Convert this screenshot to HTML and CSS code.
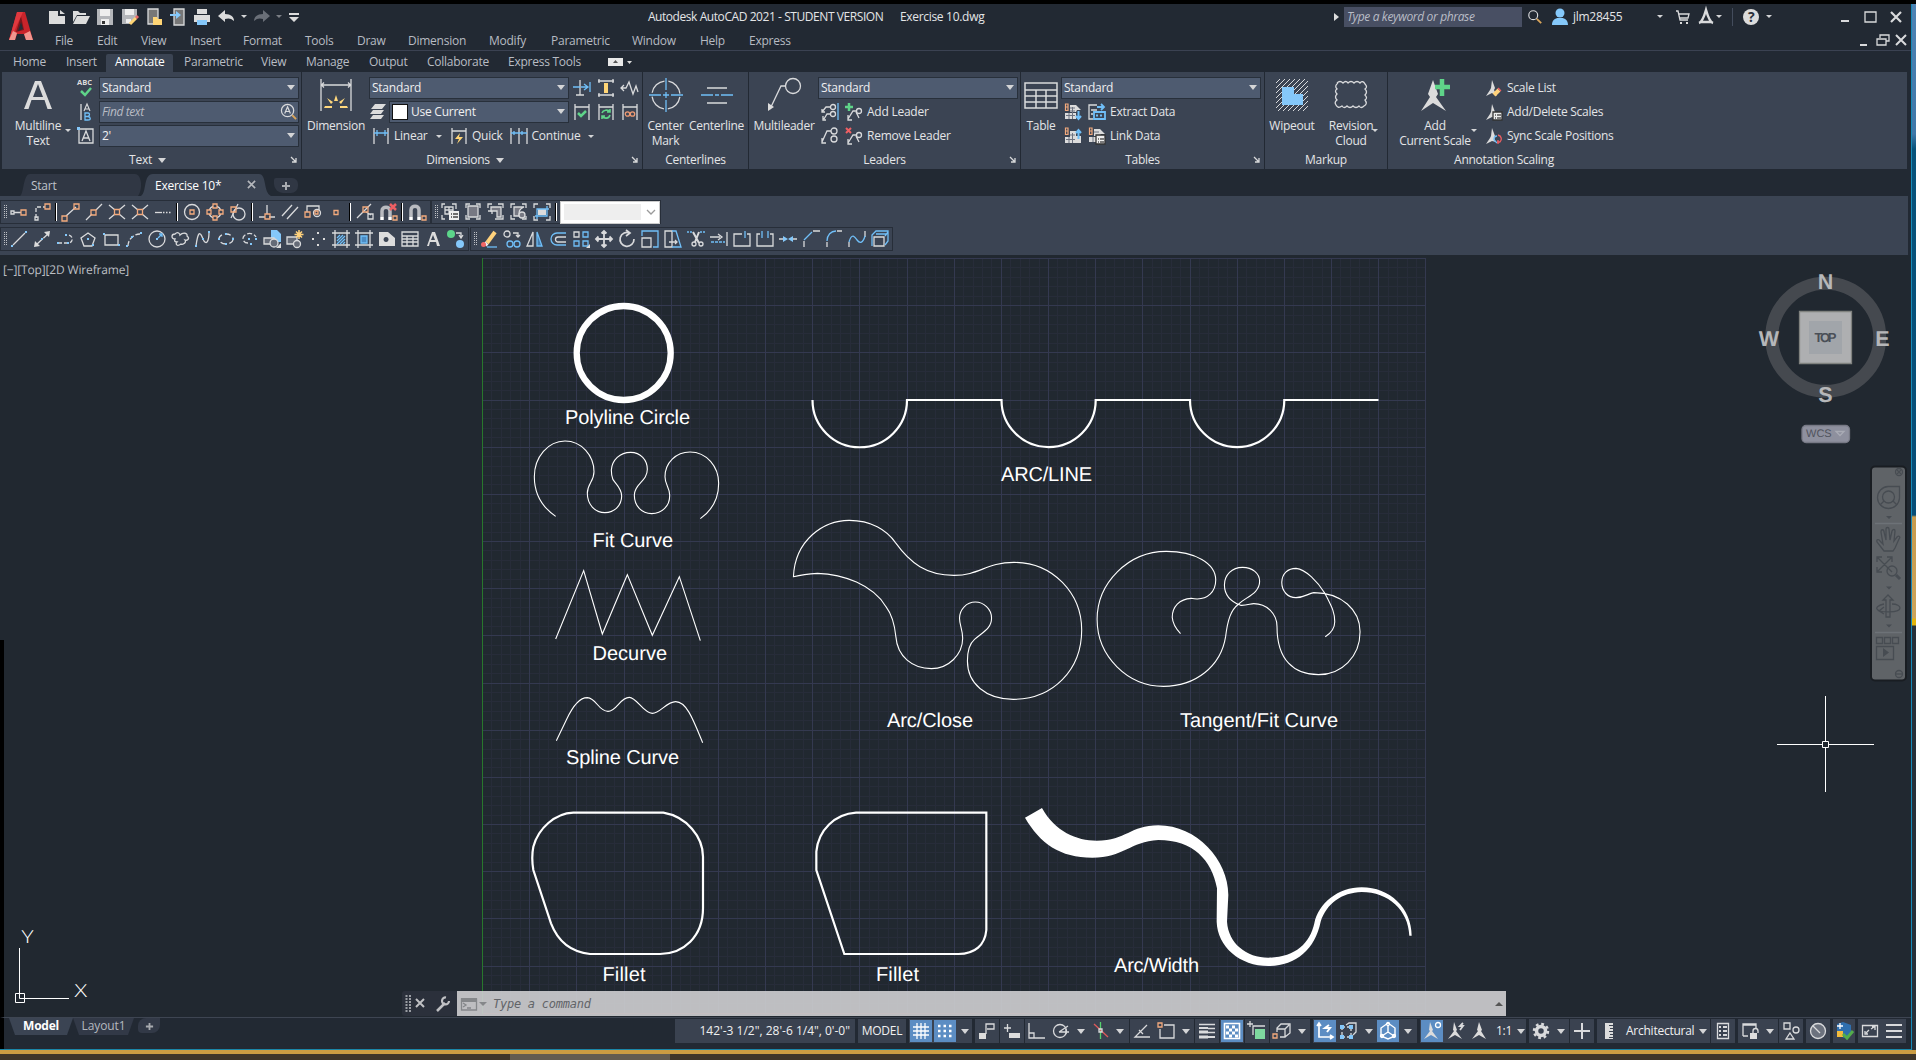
FILE: index.html
```html
<!DOCTYPE html>
<html lang="en">
<head>
<meta charset="utf-8">
<title>Autodesk AutoCAD 2021 - Exercise 10.dwg</title>
<link rel="stylesheet" href="styles.css">
</head>
<body>
<div class="desktop">
<div class="app">

<header class="titlebar">
  <svg class="logo" viewBox="0 0 26 30"><path fill="#c8242b" stroke="none" d="M9 1h8l8 28h-7l-2-6H9l-2 6H1z"/><path fill="#7c161c" stroke="none" d="M13 5l3 14-8 2z"/><path fill="#252c36" stroke="none" d="M13 11l2 7-5 2z"/><path fill="#e0393f" stroke="none" d="M9 1h6L8 16l-3 8-4 5z"/><path fill="#f2968f" stroke="none" d="M1 29l4-9 4 2-2 7zM18 29l-2-6 6-3 3 9z"/></svg>
  <div class="title-rows">
    <div class="row quick">
      <svg class="q" viewBox="0 0 18 18"><path class="fw" d="M1 3h9v5h7v8H1zM12 2l5 4h-5z"/></svg>
      <svg class="q" viewBox="0 0 18 18"><path class="fw" d="M1 3h5l2 2h6v2H5L1 14zM5 8h13l-4 8H1z"/></svg>
      <svg class="q" viewBox="0 0 18 18"><path class="fg" d="M1 1h16v16H1z"/><path fill="#eee" stroke="none" d="M4 1h10v7H4zM5 11h8v6H5z"/><path fill="#333" stroke="none" d="M6 13h3v3H6z"/></svg>
      <svg class="q" viewBox="0 0 18 18"><path class="fg" d="M1 1h15v9l-6 6H1z"/><path fill="#eee" stroke="none" d="M4 1h9v6H4zM5 11h5v4H5z"/><path stroke="#ffd575" stroke-width="3" d="M9 16l6-6"/><path stroke="#e76a6a" stroke-width="3" d="M15 10l2-2"/></svg>
      <svg class="q" viewBox="0 0 18 18"><path fill="#777" d="M3 1h10v15H3z"/><path class="fy" d="M8 9h4l1 2h4v6H8z"/></svg>
      <svg class="q" viewBox="0 0 18 18"><path fill="#777" d="M5 1h10v16H5z"/><path class="fb" d="M1 6h6V3l5 4-5 4V8H1z"/></svg>
      <svg class="q" viewBox="0 0 18 18"><path class="fw" d="M4 1h10v5H4zM1 7h16v7H1z"/><path class="fb" d="M4 12h10v5H4z"/></svg>
      <svg class="q" viewBox="0 0 18 18"><path class="fw" d="M1 8l7-6v4c6 0 9 3 9 7-3-3-6-3-9-2v3z"/></svg>
      <i class="caret qc"></i>
      <svg class="q" viewBox="0 0 18 18"><path fill="#6a6f78" stroke="none" d="M17 8l-7-6v4c-6 0-9 3-9 7 3-3 6-3 9-2v3z"/></svg>
      <i class="caret qc dim"></i>
      <svg class="q" viewBox="0 0 18 18"><path class="fw" d="M4 5h10v2H4zM4 9h10l-5 5z"/></svg>
      <span class="doc-title">Autodesk AutoCAD 2021 - STUDENT VERSION</span><span class="doc-name">Exercise 10.dwg</span>
      <i class="play"></i>
      <span class="search">Type a keyword or phrase</span>
      <svg class="q glass" viewBox="0 0 18 18"><circle cx="7" cy="7" r="5"/><path stroke="#d9a55b" stroke-width="2" d="M11 11l5 5"/></svg>
      <svg class="q user" viewBox="0 0 18 18"><circle class="fb" cx="9" cy="5" r="4.500"/><path class="fb" d="M1 17c0-5 3-6 5-7h6c2 1 5 2 5 7z"/></svg>
      <span class="user-name">jlm28455</span><i class="caret small"></i>
      <svg class="q cart" viewBox="0 0 18 18"><path d="M2 3h2l2 9h8M5 6h10l-1 4H6"/><path class="fw" d="M6 14h2v2H6zM12 14h2v2h-2z"/></svg>
      <svg class="q" viewBox="0 0 18 18"><path stroke-width="2.500" d="M2 15c3-1 5-6 7-13 2 7 4 12 7 13M3 14h12"/></svg>
      <i class="caret small ac"></i><i class="vline"></i>
      <svg class="q help" viewBox="0 0 18 18"><circle class="fw" cx="9" cy="9" r="8"/><text x="6" y="14">?</text></svg><i class="caret small hc"></i>
      <svg class="winbtns" viewBox="0 0 64 16"><path stroke-width="2.200" d="M1 12h8M51 3l10 10M61 3L51 13"/><path d="M25 3h11v10H25z"/></svg>
    </div>
    <nav class="row menu">
      <span>File</span><span>Edit</span><span>View</span><span>Insert</span><span>Format</span><span>Tools</span><span>Draw</span><span>Dimension</span><span>Modify</span><span>Parametric</span><span>Window</span><span>Help</span><span>Express</span>
      <svg class="docbtns" viewBox="0 0 48 16"><path stroke-width="2" d="M0 12h7M36 2l10 10M46 2L36 12"/><path d="M20 5V2h9v6h-3M17 6h9v6h-9z"/></svg>
    </nav>
  </div>
</header>

<nav class="tabs">
  <span>Home</span><span>Insert</span><span class="on">Annotate</span><span>Parametric</span><span>View</span><span>Manage</span><span>Output</span><span>Collaborate</span><span>Express Tools</span>
  <svg class="tabmin" viewBox="0 0 26 8"><path fill="#e8e8e8" stroke="none" d="M0 0h15v8H0z"/><path fill="#555" stroke="none" d="M5 5l2.500-3L10 5z"/><path class="fw" d="M19 3h5l-2.500 3z"/></svg>
</nav>

<section class="ribbon">
  <div class="panel p-text">
    <div class="pbody">
      <div class="big"><svg viewBox="0 0 32 34"><path class="fw" d="M13 3h6l11 28h-4.500l-3-9h-13l-3 9H2zM16 6l-5 13h10z" fill-rule="evenodd"/></svg><b>Multiline<br>Text</b><i class="caret small corner"></i></div>
      <div class="rows">
        <div class="r"><svg class="s" viewBox="0 0 18 18"><text class="abc" x="0" y="6">ABC</text><path class="g" stroke-width="2.500" d="M4 12l4 4 6-7"/></svg><span class="combo">Standard<i class="caret"></i></span></div>
        <div class="r"><svg class="s" viewBox="0 0 18 18"><path d="M4 1v16"/><path stroke-width="1.100" d="M7 8l3-7 3 7M8 6h4"/><path class="b" d="M8 10v7h3c3 0 3-3 0-3.500H8h3c2-.5 2-3.500 0-3.500z"/></svg><span class="combo find">Find text<svg class="fi" viewBox="0 0 18 18"><circle cx="8" cy="8" r="6.500"/><path d="M5 11l3-7 3 7M6 9h4"/><path stroke="#d9a55b" stroke-width="2" d="M13 13l4 4"/></svg></span></div>
        <div class="r"><svg class="s" viewBox="0 0 18 18"><path d="M2 2h14v14H2zM5 14L9 4l4 10M6 11h6"/><path class="fb" d="M0 0h3v3H0z"/></svg><span class="combo">2'<i class="caret"></i></span></div>
      </div>
    </div>
    <div class="ptitle">Text<i class="caret"></i><svg class="launch" viewBox="0 0 8 8"><path d="M1 1l5 5M6 2v4H2"/></svg></div>
  </div>

  <div class="panel p-dim">
    <div class="pbody">
      <div class="big"><svg viewBox="0 0 34 34"><path d="M2 1v32M32 1v32M2 7h30M5 4.500L2.500 7 5 9.500M29 4.500L31.500 7 29 9.500"/><path fill="#ffd87d" stroke="none" d="M15 23l2-6 2 6zM8 20l6 4-2 2zM26 20l-6 4 2 2zM6 28h7v2H5zM28 28h-7v2h8z"/></svg><b>Dimension</b></div>
      <div class="rows">
        <div class="r"><span class="combo">Standard<i class="caret"></i></span>
          <svg class="s" viewBox="0 0 18 18"><path d="M7 1v15M3 16h8"/><path class="b" d="M0 8h7M8 8h6M11 5l4 3-4 3M17 3v10"/></svg>
          <svg class="s" viewBox="0 0 18 18"><path d="M1 2h16M1 16h16M2 0v4M2 14v4M16 0v4M16 14v4"/><path class="fy" d="M7 4h4v10H7z"/></svg>
          <svg class="s" viewBox="0 0 18 18"><path d="M0 9h5l3-6 4 12 3-8 2 6M3 6L0 9l3 3"/></svg></div>
        <div class="r"><svg class="s lay" viewBox="0 0 18 18"><path class="fw" d="M6 1h11l-4 5H2zM4 7h11l-3 4H1zM4 12h11l-3 4H1z"/></svg><span class="combo use"><i class="swatch"></i>Use Current<i class="caret"></i></span>
          <svg class="s" viewBox="0 0 18 18"><path d="M2 1v16M16 1v16M2 4h14"/><path class="g" stroke-width="2.500" d="M5 10l3 3 5-5"/></svg>
          <svg class="s" viewBox="0 0 18 18"><path d="M2 1v16M16 1v16M2 4h14"/><path class="g" stroke-width="1.600" d="M5 10c1-3 6-4 8-1M13 12c-1 4-6 4-8 1M13 6v3h-3M5 16v-3h3"/></svg>
          <svg class="s" viewBox="0 0 18 18"><path d="M2 1v16M16 1v16M2 4h14"/><circle class="r1" cx="6.500" cy="11" r="2.200"/><circle class="r1" cx="11.500" cy="11" r="2.200"/></svg></div>
        <div class="r cmds"><svg class="s" viewBox="0 0 18 18"><path d="M2 1v16M16 1v16"/><path class="b" d="M2 6h14M5 3v6M13 3v6"/></svg><em>Linear</em><i class="caret small"></i>
          <svg class="s quickd" viewBox="0 0 18 18"><path d="M2 1v16M16 1v16M2 4h14"/><path class="fy" d="M10 6l-5 6h4l-2 5 6-7H9z"/></svg><em>Quick</em>
          <svg class="s cont" viewBox="0 0 18 18"><path d="M1 1v16M9 1v16M17 1v16"/><path class="b" d="M1 6h16M4 4v4M12 4v4"/></svg><em>Continue</em><i class="caret small"></i></div>
      </div>
    </div>
    <div class="ptitle">Dimensions<i class="caret"></i><svg class="launch" viewBox="0 0 8 8"><path d="M1 1l5 5M6 2v4H2"/></svg></div>
  </div>

  <div class="panel p-cen">
    <div class="pbody">
      <div class="big"><svg viewBox="0 0 34 34"><circle cx="17" cy="17" r="14" stroke-dasharray="18 4" stroke-dashoffset="-2"/><path class="b" d="M17 0v12M17 22v12M0 17h12M22 17h12M14 17h6M17 14v6"/></svg><b>Center<br>Mark</b></div>
      <div class="big"><svg viewBox="0 0 34 34"><path d="M7 10h20M7 25h20"/><path class="b" d="M1 17h12M15 17h4M21 17h12"/></svg><b>Centerline</b></div>
    </div>
    <div class="ptitle">Centerlines</div>
  </div>

  <div class="panel p-lead">
    <div class="pbody">
      <div class="big"><svg viewBox="0 0 34 34"><circle cx="26" cy="8" r="7.500"/><path d="M19 8h-5L3 31"/><path class="fw" d="M1 33V25l6 4z"/></svg><b>Multileader</b></div>
      <div class="rows">
        <div class="r"><span class="combo">Standard<i class="caret"></i></span></div>
        <div class="r cmds l"><svg class="s" viewBox="0 0 18 18"><circle cx="12" cy="4" r="2.500"/><circle cx="12" cy="11" r="2.500"/><path d="M10 4H5L1 9M10 11H6l-3 5M1 6v3h3M2 13v4h3"/><path class="b" d="M17 0v17"/></svg><svg class="s" viewBox="0 0 18 18"><path class="g" stroke-width="2.500" d="M4 0v8M0 4h8"/><circle cx="14" cy="8" r="2.500"/><path d="M12 8H8l-5 8M11 9l3 6M3 12v5h4"/></svg><em>Add Leader</em></div>
        <div class="r cmds l"><svg class="s" viewBox="0 0 18 18"><circle cx="13" cy="4" r="3"/><circle cx="13" cy="12" r="3"/><path d="M10 4H6L1 15M1 11v5h4"/></svg><svg class="s" viewBox="0 0 18 18"><path class="red" stroke-width="2" d="M1 1l5 5M6 1L1 6"/><circle cx="14" cy="8" r="2.500"/><path d="M12 8H8l-5 8M11 9l3 6M3 12v5h4"/></svg><em>Remove Leader</em></div>
      </div>
    </div>
    <div class="ptitle">Leaders<svg class="launch" viewBox="0 0 8 8"><path d="M1 1l5 5M6 2v4H2"/></svg></div>
  </div>

  <div class="panel p-tab">
    <div class="pbody">
      <div class="big"><svg viewBox="0 0 34 34"><path stroke-width="1.500" d="M1 5h32v25H1zM1 12h32M1 18h32M1 24h32M12 12v18M22 12v18"/></svg><b>Table</b></div>
      <div class="rows">
        <div class="r"><span class="combo">Standard<i class="caret"></i></span></div>
        <div class="r cmds l"><svg class="s" viewBox="0 0 18 18"><path class="fw" d="M6 2h6l5 5h-4l-1 2H6zM1 10h11v6H1z"/><path stroke="#6d7380" stroke-width="1" d="M6 5h5M6 8h5M2 12.500h9M5 10v6M8.500 4v12"/><path stroke="#f3aa7d" stroke-width="1.200" d="M1.500 1h2.500v3H1.500zM1.500 4H4v3.500H1.500z"/><path class="b" stroke-width="2" d="M14.500 8v7M12 13l2.500 3 2.500-3"/></svg><svg class="s" viewBox="0 0 18 18"><path d="M9 2H1v14h4M3 7h6M3 11h2"/><path class="b" stroke-width="1.800" d="M9 4h7M13 1l3 3-3 3M6 9h11v7H6zM8 12.500h2M12 12.500h2"/></svg><em>Extract Data</em></div>
        <div class="r cmds l"><svg class="s" viewBox="0 0 18 18"><path class="fw" d="M6 4h6v5h5v7H1v-6h5z"/><path stroke="#6d7380" stroke-width="1" d="M6 8h5M2 12.500h9M5 10v6M8.500 6v10"/><path stroke="#f3aa7d" stroke-width="1.200" d="M1.500 1h2.500v3H1.500zM1.500 4H4v3.500H1.500z"/><path class="b" stroke-width="2" d="M14.500 12V4M12 6l2.500-3L17 6"/></svg><svg class="s" viewBox="0 0 18 18"><path class="fw" d="M6 2h6l5 5h-4l-1 2H6zM1 10h11v5H1z"/><path stroke="#6d7380" stroke-width="1" d="M6 5h5M5 10v5"/><path stroke="#f3aa7d" stroke-width="1.200" d="M1.500 1h2.500v3H1.500zM1.500 4H4v3.500H1.500z"/><path fill="#eee" stroke="#333" d="M8 8h9v9H8z"/><path stroke="#555" d="M10 12h1M12 12h4M10 15h1M12 15h4"/></svg><em>Link Data</em></div>
      </div>
    </div>
    <div class="ptitle">Tables<svg class="launch" viewBox="0 0 8 8"><path d="M1 1l5 5M6 2v4H2"/></svg></div>
  </div>

  <div class="panel p-mark">
    <div class="pbody">
      <div class="big"><svg viewBox="0 0 34 34"><path stroke-width="1" d="M1 5l4-4M1 10l9-9M1 15L15 1M1 20L20 1M1 25L25 1M1 30L30 1M3 33L33 3M8 33L33 8M13 33l20-20M18 33l15-15M23 33l10-10M28 33l5-5"/><path class="fb" d="M7 9h12v7h9v11H7z"/></svg><b>Wipeout</b></div>
      <div class="big"><svg viewBox="0 0 34 34"><path d="M3 5q3-3 6 0q3-3 5 0q3-3 6 0q3-3 6 0q3-3 5 1q3 3 0 5q3 3 0 6q3 3 0 5q3 4-1 6q-3 3-5 0q-3 3-6 0q-3 3-6 0q-3 3-5 0q-4 3-6-1q-2-3 1-5q-3-3 0-6q-3-3 0-5q-3-3 1-6"/></svg><b>Revision<br>Cloud</b><i class="caret small corner"></i></div>
    </div>
    <div class="ptitle">Markup</div>
  </div>

  <div class="panel p-ann">
    <div class="pbody">
      <div class="big"><svg viewBox="0 0 34 34"><path class="fw" d="M15 2l5 14-2 3 10 14-13-8-12 8 9-14-2-3z"/><path class="g" stroke-width="4.500" d="M24 1v17M17 9h15"/></svg><b>Add<br>Current Scale</b><i class="caret small corner"></i></div>
      <div class="rows ann">
        <div class="r cmds"><svg class="s" viewBox="0 0 18 18"><path class="fw" d="M7 1l3 8-1 2 3 6-5-3-6 3 4-6 1-2z"/><path class="yl" stroke-width="4" d="M9 16l5-5"/><path class="red" stroke-width="4" d="M14 11l1-1"/></svg><em>Scale List</em></div>
        <div class="r cmds"><svg class="s" viewBox="0 0 18 18"><path class="fw" d="M7 1l3 8-1 2 3 6-5-3-6 3 4-6 1-2z"/><path fill="#eee" stroke="#333" d="M8 9h9v8H8z"/><path stroke="#555" d="M10 12h1M12 12h4M10 15h1M12 15h4"/></svg><em>Add/Delete Scales</em></div>
        <div class="r cmds"><svg class="s" viewBox="0 0 18 18"><path class="fw" d="M7 1l3 8-1 2 2 4-4-1-6 3 4-6 1-2z"/><path class="b" d="M9 13c0-3 1-4 3-4M9 13l3 3"/><path class="red" d="M13 8c4 1 4 5 2 7M15 15h-3M13 17v-4"/></svg><em>Sync Scale Positions</em></div>
      </div>
    </div>
    <div class="ptitle at">Annotation Scaling</div>
  </div>
</section>

<nav class="files">
  <span class="ft start">Start</span><span class="ft act">Exercise 10*<svg viewBox="0 0 10 10"><path stroke-width="1.800" d="M1 1l8 8M9 1L1 9"/></svg></span><span class="plus"><svg viewBox="0 0 10 10"><path stroke-width="2" d="M5 1v8M1 5h8"/></svg></span>
</nav>

<section class="toolbars">
  <div class="tbrow">
    <div class="tb">
      <i class="grip"></i>
      <svg viewBox="0 0 20 20"><path d="M2 9h3v3H2zM5 10.500h7"/><path class="o" d="M12 8h5v5h-5z"/></svg>
      <svg viewBox="0 0 20 20"><path stroke-dasharray="4 2" d="M4 16V5h9"/><path d="M3 15h3v3H3z"/><path class="o" d="M13 2h5v5h-5z"/></svg>
      <i class="sep"></i>
      <svg viewBox="0 0 20 20"><path d="M5 14L15 5"/><path class="o" d="M1 14h5v5H1zM13 2h5v5h-5z"/></svg>
      <svg viewBox="0 0 20 20"><path d="M2 18l6-6M12 8l6-6"/><path class="o" d="M7 8h5v5H7z"/></svg>
      <svg viewBox="0 0 20 20"><path d="M2 3l6 5M12 12l6 5M18 3l-6 5M8 12l-6 5"/><path class="o" d="M7.500 7.500h5v5h-5z"/></svg>
      <svg viewBox="0 0 20 20"><path d="M2 3l6 5M12 12l6 5M18 3l-6 5M8 12l-6 5"/><path class="o" d="M7.500 7.500h5v5h-5z"/></svg>
      <svg viewBox="0 0 20 20"><path d="M2 10.500h7"/><path stroke-dasharray="1.500 1.500" d="M10 10.500h8"/></svg>
      <i class="sep"></i>
      <svg viewBox="0 0 20 20"><circle cx="10" cy="10" r="7.500"/><path class="o" d="M8 8h4v4H8z"/></svg>
      <svg viewBox="0 0 20 20"><circle cx="10" cy="10" r="6"/><path class="o tbg" d="M8 2h4v4H8zM8 14h4v4H8zM2 8h4v4H2zM14 8h4v4h-4z"/></svg>
      <svg viewBox="0 0 20 20"><circle cx="11" cy="12" r="6"/><path d="M3 16L10 2"/><path class="o" d="M3 5h5v5H3z"/></svg>
      <i class="sep"></i>
      <svg viewBox="0 0 20 20"><path d="M10 3v9M2 15h6M12 15h6"/><path class="o" d="M8 12h5v5H8z"/></svg>
      <svg viewBox="0 0 20 20"><path d="M2 14L12 3M7 17L18 5"/></svg>
      <svg viewBox="0 0 20 20"><path d="M4 10V4h12v4"/><circle cx="14" cy="11" r="3.500"/><path class="o" d="M2 10h5v5H2zM12 9h3v3h-3z"/></svg>
      <svg viewBox="0 0 20 20"><path class="o" d="M8 8.500h4v4H8z"/></svg>
      <i class="sep"></i>
      <svg viewBox="0 0 20 20"><path d="M2 16L16 2M11 10l5 3M13 12h5v5h-5z"/><path class="o" d="M8 5h5v5H8z"/></svg>
      <svg viewBox="0 0 20 20"><path stroke="#b9bbc0" stroke-width="3.500" d="M4 15V9c0-5 8-5 8 0v6"/><path stroke="#fff" stroke-width="3.500" d="M4 15v3M12 15v3"/><path class="red" stroke-width="2.500" d="M12 2l6 6M18 2l-6 6"/><path class="o" d="M15 14h4v4h-4z"/></svg>
      <i class="sep"></i>
      <svg viewBox="0 0 20 20"><path stroke="#b9bbc0" stroke-width="3.500" d="M4 15V8c0-5 8-5 8 0v7"/><path stroke="#fff" stroke-width="3.500" d="M4 15v3M12 15v3"/><path class="o" d="M15 14h4v4h-4z"/></svg>
    </div>
    <div class="tb last">
      <i class="grip"></i>
      <svg viewBox="0 0 20 20"><path d="M2 6V2h3M12 2h4v5M2 13v4h3M5 5h8v7H5zM5 8h8M9 5v7"/><path fill="#eee" stroke="none" d="M9 9h10v9H9z"/><path stroke="#444" d="M11 12h1M13 12h5M11 15h1M13 15h5"/></svg>
      <svg viewBox="0 0 20 20"><path d="M3 6V2h4M13 2h4v4M3 13v4h4M13 17h4v-4"/><path fill="#777983" d="M5 4h10v11H5z"/></svg>
      <svg viewBox="0 0 20 20"><path d="M2 6V2h4M12 2h5v4M9 17h8v-4M2 9h4v3"/><path fill="#777983" d="M5 5h10v10h-4V9H5z"/></svg>
      <svg viewBox="0 0 20 20"><path d="M2 6V2h4M13 2h4v4M2 13v4h4M13 17h4v-3"/><path fill="#777983" d="M5 5h10c-5 2-5 4-5 9H5z"/><circle fill="#777983" cx="13" cy="13" r="3"/></svg>
      <svg viewBox="0 0 20 20"><path d="M2 6V2h4M14 2h4v4M2 14v4h4M14 18h4v-4"/><path class="fw" d="M6 7h8v6H6z"/><path class="b" d="M3 14h12V4M5 17V7h12"/></svg>
      <i class="sep"></i>
      <span class="vpcombo"><i></i><svg viewBox="0 0 10 10"><path stroke="#9a9a9a" d="M1 3l4 4 4-4"/></svg></span>
    </div>
  </div>
  <div class="tbrow">
    <div class="tb draw">
      <i class="grip"></i>
      <svg viewBox="0 0 20 20"><path d="M4 16L16 4"/><path class="fb" d="M2 16h2v2H2zM16 2h2v2h-2z"/></svg>
      <svg viewBox="0 0 20 20"><path stroke-dasharray="8 2" d="M4 16L17 4"/><path class="fw" d="M2 18l1-6 5 5zM18 2l-6 1 5 5z"/><path class="fb" d="M9 9h2v2H9z"/></svg>
      <svg viewBox="0 0 20 20"><path stroke-dasharray="4 2" d="M3 14h11c5-1 4-9-2-8"/><path class="fb" d="M2 13h2v2H2zM12 13h2v2h-2zM10 5h2v2h-2z"/></svg>
      <svg viewBox="0 0 20 20"><path d="M10 4l7 5-3 8H6L3 9z"/><path class="fb" d="M9 9h2v2H9zM14 15h2v2h-2z"/></svg>
      <svg viewBox="0 0 20 20"><path d="M4 6h13v10H4z"/><path class="fb" d="M2 4h2v2H2zM17 15h2v2h-2z"/></svg>
      <svg viewBox="0 0 20 20"><path stroke-dasharray="5 2" d="M4 17C4 10 10 5 16 5"/><path class="fb" d="M2 16h2v2H2zM7 7h2v2H7zM16 3h2v2h-2z"/></svg>
      <svg viewBox="0 0 20 20"><circle cx="10" cy="10" r="8"/><path class="b" d="M11 9l4-4M12 5h3v3"/><path class="fb" d="M9 9h2v2H9z"/></svg>
      <svg viewBox="0 0 20 20"><path d="M5 10c-4 0-4-5 0-5 3-3 5 0 5 1 3-3 8-2 7 1 3 2 1 5-2 4 2 3-3 5-4 4-4 3-6 0-4-2-2 0-3-1-2-3z"/></svg>
      <svg viewBox="0 0 20 20"><path d="M3 17C5 2 7 2 10 10c3 7 6 3 6-7"/><path class="fb" d="M2 16h2v2H2zM9 9h2v2H9zM15 2h2v2h-2z"/></svg>
      <svg viewBox="0 0 20 20"><ellipse cx="10" cy="10" rx="7" ry="5" stroke-dasharray="6 3"/><path class="fb" d="M9 4h2v2H9zM2 9h2v2H2zM16 9h2v2h-2zM9 14h2v2H9z"/></svg>
      <svg viewBox="0 0 20 20"><path stroke-dasharray="5 2" d="M9 14C4 14 3 9 5 7c3-4 10-3 12 1"/><path class="fb" d="M9 9h2v2H9zM16 9h2v2h-2zM11 14h2v2h-2z"/></svg>
      <svg viewBox="0 0 20 20"><path class="fb" d="M9 1h6l4 4v8H9z"/><path fill="#656b77" d="M2 9h10v6H2z"/><circle fill="#656b77" cx="12" cy="14" r="4"/><path class="fw" d="M19 14v5h-5z"/></svg>
      <svg viewBox="0 0 20 20"><path fill="#656b77" d="M2 8h10v7H2z"/><circle fill="#656b77" cx="12" cy="15" r="3.500"/><path class="yl" stroke-width="1.500" d="M14 1v9M9.500 5.500h9M11 2.500l6 6M17 2.500l-6 6"/></svg>
      <svg viewBox="0 0 20 20"><path class="fw" d="M9 3h2v2H9zM4 9h2v2H4zM15 9h2v2h-2zM9 15h2v2H9z"/></svg>
      <svg viewBox="0 0 20 20"><path d="M4 1v18M16 1v18M1 4h18M1 16h18"/><path class="b" d="M6 9l3-3M6 12l6-6M6 15l8-8M9 15l5-5M12 15l2-2"/></svg>
      <svg viewBox="0 0 20 20"><path d="M4 1v18M16 1v18M1 4h18M1 16h18"/><path class="b" fill="#4c8cc4" d="M7 7h6v7H7z"/></svg>
      <svg viewBox="0 0 20 20"><path class="fw" fill-rule="evenodd" d="M2 3h9l7 6v8H2zM9 8a2.500 2.500 0 1 0 .1 0z"/></svg>
      <svg viewBox="0 0 20 20"><path d="M2 3h16v14H2zM2 7h16M2 10h16M2 13h16M7 7v10M13 7v10"/></svg>
      <svg viewBox="0 0 20 20"><path class="fw" fill-rule="evenodd" d="M9 3h3l5 14h-3l-1-4H7l-1 4H4zM10 6l-2 5h4z"/></svg>
      <svg viewBox="0 0 20 20"><circle fill="#5cd68a" stroke="none" cx="5" cy="5" r="4"/><circle class="fb" cx="14" cy="15" r="4"/><path d="M10 4h5v4M13 6l2 3 2-3"/></svg>
    </div>
    <div class="tb mod">
      <i class="grip"></i>
      <svg viewBox="0 0 20 20"><path class="yl" stroke-width="4" d="M8 14L16 3"/><path stroke="#eee" stroke-width="4" d="M6 16l2-2"/><circle fill="#f26666" stroke="none" cx="4.500" cy="15.500" r="2.500"/><path class="b" d="M8 18h10"/></svg>
      <svg viewBox="0 0 20 20"><circle cx="5" cy="5" r="3"/><path d="M11 4h5v4M14 6l2 2 2-2"/><circle class="b" cx="8" cy="15" r="3"/><circle class="b" cx="15" cy="15" r="3"/></svg>
      <svg viewBox="0 0 20 20"><path d="M8 3v14H2z"/><path class="b" fill="#467dae" d="M12 3v14h5z"/></svg>
      <svg viewBox="0 0 20 20"><path class="b" d="M18 4H9a6 6 0 0 0 0 12h9"/><path d="M18 8h-8a2.500 2.500 0 0 0 0 5h8"/></svg>
      <svg viewBox="0 0 20 20"><path d="M3 3h5v5H3z"/><path class="b" d="M12 3h5v5h-5zM3 12h5v5H3zM12 12h5v5h-5z"/><path class="fw" d="M19 15v4h-4z"/></svg>
      <svg viewBox="0 0 20 20"><path stroke-width="1.800" d="M10 2v16M2 10h16M7.500 4.500L10 2l2.500 2.500M7.500 15.500L10 18l2.500-2.500M4.500 7.500L2 10l2.500 2.500M15.500 7.500L18 10l-2.500 2.500"/></svg>
      <svg viewBox="0 0 20 20"><path stroke-width="1.700" d="M13 4a7 7 0 1 0 4 6M9 1l4 3-4 3"/></svg>
      <svg viewBox="0 0 20 20"><path class="b" d="M2 7V2h16v16h-5"/><path d="M2 9h9v9H2z"/></svg>
      <svg viewBox="0 0 20 20"><path d="M2 2h7v16H2zM6 13h8M12 11l2 2-2 2"/><path class="b" d="M9 2h4l5 16H9"/></svg>
      <svg viewBox="0 0 20 20"><path class="b" stroke-dasharray="2 1" d="M1 3h5M14 3h5"/><path stroke-width="2" d="M7 3l6 11M13 3L9 13"/><circle cx="8" cy="15" r="2"/><circle cx="15" cy="15" r="2"/></svg>
      <svg viewBox="0 0 20 20"><path d="M1 8h10M9 5l4 3-4 3M18 3v14"/><path class="b" stroke-dasharray="3 1" d="M2 13h14"/></svg>
      <svg viewBox="0 0 20 20"><path d="M10 5H2v12h16V5h-3"/><path class="b" d="M13 2v7"/></svg>
      <svg viewBox="0 0 20 20"><path d="M5 5H2v12h16V5h-3"/><path class="b" d="M7 2v7M13 2v7"/></svg>
      <svg viewBox="0 0 20 20"><path d="M1 10h4M15 10h4"/><path class="fb" d="M5 7l5 3-5 3zM15 7l-5 3 5 3z"/></svg>
      <svg viewBox="0 0 20 20"><path d="M3 18v-6M12 2h7"/><path class="b" d="M3 11l8-8"/></svg>
      <svg viewBox="0 0 20 20"><path d="M3 18v-5M13 2h5"/><path class="b" d="M3 12C3 6 7 2 12 2"/></svg>
      <svg viewBox="0 0 20 20"><path d="M2 18v-5M18 2v6"/><path class="b" d="M2 13C5 3 8 8 10 11c3 4 6 3 8-4"/></svg>
      <svg viewBox="0 0 20 20"><path d="M4 8h10v9H4z"/><path class="b" d="M2 17V6l4-4h12v10l-3 4M6 5h10M15 7l3-4"/></svg>
    </div>
  </div>
</section>

<main class="canvas">
  <svg class="drawing" viewBox="0 255 1911 762" text-rendering="geometricPrecision">
    <g class="grid">
      <path class="minor" stroke-width="755" stroke-dasharray="1 8.434" d="M482 635.500H1426.500"/>
      <path class="minor" stroke-width="944" stroke-dasharray="1 8.434" d="M954 258V1014"/>
      <path class="major" stroke-width="755" stroke-dasharray="1 46.170" d="M482 635.500H1426.500"/>
      <path class="major" stroke-width="944" stroke-dasharray="1 46.170" d="M954 258V1014"/>
      <path stroke="#28772c" stroke-width="1" d="M482.500 258V1014"/><path stroke="#6b2530" stroke-width="1" d="M483 1013.500H1426"/>
    </g>
    <path fill="#000" stroke="none" d="M0 640h4v377H0z"/>
    <g class="ents">
      <circle cx="623.700" cy="353" r="47" stroke-width="6.300"/>
      <path class="w2" d="M812.500 400A40 40 0 0 0 907 400H1001.500A40 40 0 0 0 1095.700 400H1190A40 40 0 0 0 1284.300 400H1378.500"/>
      <g transform="translate(470 280) scale(.33333)">
        <path d="M257 709C215 680 193 640 193 590C193 530 235 483 285 483C335 483 372 527 372 575C372 605 352 610 352 640C352 673 374 698 405 698C433 698 455 676 455 648C455 625 438 613 429 599C425 590 424 580 424 570C426 540 450 517 482 517C512 517 532 540 532 568C532 605 493 610 493 645C493 678 515 701 545 701C576 701 600 678 599 645C599 622 585 615 585 590C585 548 618 516 660 516C710 516 746 560 746 610C746 655 725 692 691 716"/>
        <path d="M257 1077L341 872L397 1062L472 884L547 1066L628 890L691 1082"/>
      </g>
      <g transform="translate(470 640) scale(.33333)">
        <path d="M259 302L290 238C310 195 330 173 352 173C380 175 385 214 414 214C440 214 450 172 478 172C500 172 520 220 547 220C570 220 590 185 617 185C650 185 670 240 698 308"/>
        <path class="w2" d="M310 518H580C650 530 699 590 699 650V805C699 890 640 942 570 942H360C300 935 262 900 243 850L190 690C185 660 187 635 190 620C205 565 255 520 310 518Z"/>
        <path class="w2" d="M1158 518H1549V870C1545 915 1515 942 1465 942H1123L1039 690V635C1045 570 1095 522 1158 518Z"/>
      </g>
      <g transform="translate(780 380) scale(.3954 .33333)">
        <path d="M34 590C38 480 110 421 175 421C230 421 270 450 292 488C330 550 370 586 440 586C505 586 520 548 592 547C690 547 763 640 763 750C763 870 690 958 590 958C520 958 474 910 474 843C474 810 480 790 492 778C515 755 535 745 535 714C535 687 515 666 494 666C472 666 454 688 454 715C454 735 462 748 462 775C462 825 425 866 383 866C335 866 297 830 293 770C290 735 284 705 268 680C235 615 160 582 95 580Q60 583 34 590Z"/>
        <path d="M1013 761C1000 745 993 730 992 712C992 680 1010 657 1040 655C1085 665 1102 630 1102 600C1102 550 1050 514 977 514C880 514 802 610 802 718C802 830 880 919 970 919C1050 919 1115 860 1127 770C1132 720 1140 690 1160 672C1180 650 1213 640 1213 604C1213 580 1195 562 1170 562C1143 562 1124 585 1124 615C1124 645 1140 665 1165 676C1180 677 1190 671 1198 671C1230 671 1257 700 1257 740C1257 840 1300 884 1362 884C1420 884 1467 830 1467 755C1467 690 1420 638 1350 638C1335 641 1325 653 1305 653C1285 653 1269 635 1269 607C1270 580 1285 565 1305 565C1330 568 1360 605 1378 640C1395 680 1403 695 1403 725C1403 745 1395 758 1379 770"/>
      </g>
      <path class="solid" transform="translate(980 780) scale(.33333)" d="M186 84C225 155 290 182 350 182C440 182 450 136 535 136C650 136 745 240 745 345L741 425C745 490 800 533 865 533C945 533 990 490 1003 430C1015 370 1075 322 1145 322C1230 322 1295 385 1295 467L1288 467C1285 390 1225 336 1145 336C1085 338 1040 370 1022 425C1005 510 945 558 865 558C780 558 712 500 710 425L711 325C695 240 640 180 535 180C450 185 430 233 337 233C240 233 180 190 135 113Z"/>
    </g>
    <g class="labels">
      <text x="565" y="424" textLength="125">Polyline Circle</text>
      <text x="592.500" y="547" textLength="80.500">Fit Curve</text>
      <text x="592.500" y="660" textLength="74.500">Decurve</text>
      <text x="566" y="764" textLength="113">Spline Curve</text>
      <text x="602.500" y="981" textLength="43">Fillet</text>
      <text x="876" y="981" textLength="43">Fillet</text>
      <text x="1001" y="481" textLength="91">ARC/LINE</text>
      <text x="887" y="727" textLength="86">Arc/Close</text>
      <text x="1180" y="727" textLength="158">Tangent/Fit Curve</text>
      <text x="1114" y="972" textLength="85">Arc/Width</text>
    </g>
    <text class="vp" x="3" y="273.500" textLength="126">[&#8722;][Top][2D Wireframe]</text>
    <g class="ucs"><path d="M19.500 948V998.500H69M15.500 993.500h9v9h-9z"/><text x="21.500" y="943" textLength="12" lengthAdjust="spacingAndGlyphs">Y</text><text x="74.500" y="997" textLength="12.500" lengthAdjust="spacingAndGlyphs">X</text></g>
    <g class="ucs"><path d="M1825.500 696V741.500M1825.500 747V792M1777 744.500H1822.500M1828 744.500H1874M1822.500 741.500h6v6h-6z"/></g>
    <g class="cube">
      <circle cx="1825.700" cy="337.300" r="54" fill="none" stroke="#45494f" stroke-width="13"/>
      <path fill="#aeafb1" stroke="#80827f" d="M1799.500 311.500h52v52h-52z"/><path fill="#a1a5aa" d="M1809 321h33v33h-33z"/>
      <text class="face" x="1825.500" y="342" textLength="22">TOP</text>
      <text x="1825.500" y="288.500">N</text><text x="1769" y="345.500">W</text><text x="1882.500" y="345.500">E</text><text x="1825.500" y="402">S</text>
      <rect x="1802" y="425.500" width="47.500" height="17" rx="4" fill="#8e909e" stroke="#777985"/>
      <text class="wcs" x="1806" y="437">WCS</text><path fill="#8e909e" stroke="#a9abb5" d="M1836 431.500h8l-4 4z"/>
    </g>
    <g class="navbar">
      <rect x="1871" y="466.500" width="35" height="214" rx="4" fill="#5f6367" stroke="#191d22" stroke-width="2"/>
      <path class="fill" d="M1886 516h6l-3 3zM1886 586.500h6l-3 3zM1886 624.500h6l-3 3zM1883 648v9l6-4.500z"/>
      <path stroke="#6d7277" d="M1875 523.500h27M1875 632.500h27"/>
      <circle cx="1899" cy="472" r="3.500"/><path d="M1897 470l4 4M1901 470l-4 4"/>
      <path d="M1888 486.500h11.500v11.500a11 11 0 1 1-11.500-11.500z"/><circle cx="1888.500" cy="497" r="6"/><path d="M1884 501l-4 4M1893 501l4 4"/>
      <path d="M1884 551l-7-9c-1-3 2-3 3-1l3 3-2-12c0-3 3-3 3 0l2 8v-11c0-2 3-2 3 0l1 11 2-9c1-2 3-2 3 0l-1 10 3-4c2-2 4 0 2 2l-4 9-2 3z"/>
      <path d="M1877 557l15 15M1892 557l-15 15M1877 562v-5h5M1887 557h5v5M1877 567v5h5"/><circle cx="1892" cy="571" r="5"/><path stroke-width="3" d="M1896 575l4 4"/>
      <path d="M1886 617v-17h-3l5-5 5 5h-3v17zM1884 604c-6 1-8 4-7 5 2 4 23 4 23-1 0-2-3-4-8-4M1884 607l-5 4 5 3"/>
      <path d="M1876.500 637.500h6v6h-6zM1884.500 637.500h6v6h-6zM1892.500 637.500h6v6h-6zM1876.500 646.500h17v13h-17z"/>
      <circle cx="1899" cy="674" r="3.500"/><path d="M1896 674h6"/>
    </g>
  </svg>
  <div class="cmdline">
    <div class="cmdgrip"><svg viewBox="0 0 55 26"><path stroke="#9a9da3" stroke-width="2" stroke-dasharray="2 1" d="M4.500 4v18M8 4v18"/><path stroke="#c0c1c4" stroke-width="2" d="M14 8l8 8M22 8l-8 8"/><path stroke="#c0c1c4" stroke-width="2.500" d="M35 20l8-8"/><path stroke="#c0c1c4" stroke-width="2.200" d="M47 10a3.500 3.500 0 1 1-3-3.500"/></svg></div>
    <div class="cmdfield"><svg viewBox="0 0 30 26"><path stroke="#85878a" d="M4.500 8h15v11h-15z"/><path fill="#85878a" stroke="none" d="M4 7h16v4H4zM22 11h8l-4 4z"/><path stroke="#85878a" d="M6 12l3 2-3 2M10 17h4"/></svg>Type a command<i class="up"></i></div>
  </div>
</main>

<footer class="status">
  <span class="lt model">Model</span><span class="lt lay1">Layout1</span><span class="lt add"><svg viewBox="0 0 10 10"><path stroke-width="2" d="M5 1v8M1 5h8"/></svg></span>
  <div class="st">
    <span class="c w coords">142'-3 1/2", 28'-6 1/4", 0'-0"</span>
    <span class="c w space">MODEL</span>
    <span class="c w"><svg class="on" viewBox="0 0 22 22"><path d="M7 3v16M11 3v16M15 3v16M3 7h16M3 11h16M3 15h16"/></svg><svg class="on" viewBox="0 0 22 22"><path stroke-width="2.500" stroke-dasharray="2.500 3" d="M4 6h14M4 11h14M4 16h14"/></svg><i class="caret"></i></span>
    <span class="c"><svg viewBox="0 0 22 22"><path class="fw" d="M3 13h7v6H3z"/><path d="M10 14V4h8v5h-7"/></svg></span>
    <span class="c"><svg viewBox="0 0 22 22"><path d="M3 8h7M6.500 4v8"/><path class="fw" d="M8 13h11v5H8z"/></svg></span>
    <span class="c"><svg viewBox="0 0 22 22"><path d="M3 3v15h16M3 13h5v5"/></svg><svg viewBox="0 0 22 22"><circle cx="10" cy="11" r="6.500"/><path d="M9 12l9-6M9 12h10M16 9v5"/></svg><i class="caret"></i><svg viewBox="0 0 22 22"><path stroke="#55d16c" d="M11.500 2v17"/><path stroke="#e05a5a" d="M5 4l14 13"/><path d="M10 9h3v3h-3z"/></svg><i class="caret"></i></span>
    <span class="c"><svg viewBox="0 0 22 22"><path d="M19 17H4L16 5M8 10l4 4"/></svg><svg viewBox="0 0 22 22"><path d="M9 5h10v13H5V9"/><path class="o" d="M3 3h4v4H3z"/></svg><i class="caret"></i></span>
    <span class="c"><svg viewBox="0 0 22 22"><path stroke-width="3" d="M3 17h9M3 12h9"/><path d="M3 4.500h16M12 8.500h7M12 12.500h7"/><path stroke-width="2" d="M3 8h9M12 17h7"/></svg></span>
    <span class="c"><svg class="on" viewBox="0 0 22 22"><path stroke-width="1.600" d="M3.500 3.500h15v15h-15z"/><path stroke-width="3" stroke-dasharray="3 3" d="M5 7h12M8 10h9M5 13h12M8 16h9"/></svg></span>
    <span class="c"><svg viewBox="0 0 22 22"><path d="M4 1v6M1 4h6M7 15V6h12"/><path fill="#7ed99f" stroke="none" d="M9 9h10v10H9z"/></svg></span>
    <span class="c w"><svg viewBox="0 0 22 22"><path d="M6 9h8v8h-5M6 12V8l4-4h9v9l-5 4M14 9l4-4"/><path class="o" d="M2 14h4v4H2z"/></svg><i class="caret"></i></span>
    <span class="c w"><svg class="on" viewBox="0 0 22 22"><path stroke-width="1.700" d="M5 4v13h13M3 6l2-3 2 3M16 15l3 2-3 2"/><path stroke-width="2" d="M15 5l-4 3h5l-3 4"/></svg><svg viewBox="0 0 22 22"><path stroke-dasharray="3 2" d="M4 7h9v10H4z"/><path d="M8 5l3-2h7v9l-3 3"/><path class="fb" d="M2 5h4v4H2zM11 5h4v4h-4zM2 15h4v4H2zM11 15h4v4h-4z"/></svg><i class="caret"></i><svg class="on" viewBox="0 0 22 22"><path stroke-width="1.400" d="M11 3l7 5v8l-7 3-7-3V8zM11 5v7M11 12l-6 4M11 12l6 4"/><circle cx="11" cy="4" r="1.500"/><circle cx="5" cy="16" r="1.500"/><circle cx="17" cy="16" r="1.500"/></svg><i class="caret"></i></span>
    <span class="c w"><svg class="on" viewBox="0 0 22 22"><path class="fw" d="M9 2l3 8-1 1 6 8-7-4-7 4 6-8-1-1z"/><circle cx="17" cy="5" r="2.500"/></svg><svg viewBox="0 0 22 22"><path class="fw" d="M9 2l3 8-1 1 6 8-7-4-7 4 6-8-1-1z"/><path stroke-width="1.800" d="M18 3l-3 3h3l-3 4"/></svg><svg viewBox="0 0 22 22"><path class="fw" d="M10 2l3 8-1 1 5 8-7-4-7 4 6-8-1-1z"/></svg><em class="ratio">1:1</em><i class="caret"></i></span>
    <span class="c"><svg viewBox="0 0 22 22"><circle cx="11" cy="11" r="4.500" stroke-width="3.500"/><circle cx="11" cy="11" r="7" stroke-width="2.500" stroke-dasharray="2.750 2.750"/></svg><i class="caret"></i></span>
    <span class="c w"><svg viewBox="0 0 22 22"><path stroke-width="2" d="M11 3v16M3 11h16"/></svg></span>
    <span class="c"><svg viewBox="0 0 22 22"><path class="fw" d="M7 3h8v2h-4v1h4v2h-3v1h3v2h-4v1h4v2h-3v1h3v2h-4v1h4v1H7z"/></svg><em class="arch">Architectural</em><i class="caret"></i></span>
    <span class="c w"><svg viewBox="0 0 22 22"><path d="M5.500 3.500h11v15h-11z"/><path stroke-width="2" d="M7 7h2M11 7h4M7 11h2M11 11h4M7 15h2M11 15h4"/></svg></span>
    <span class="c"><svg viewBox="0 0 22 22"><path d="M4 16V4h13v4M4 5h13M4 16h5"/><path class="fw" d="M11 13h7v6h-7z"/><path d="M14 13v-2a2 2 0 0 1 5 0v2"/></svg><i class="caret"></i></span>
    <span class="c w"><svg viewBox="0 0 22 22"><path d="M4 3h6v6H4zM10 13l4 6H6z"/><circle cx="16" cy="10" r="3"/></svg></span>
    <span class="c w"><svg viewBox="0 0 22 22"><circle cx="11" cy="11" r="7.500" fill="#6c727e"/><path d="M6 6l7 7"/></svg></span>
    <span class="c w"><svg viewBox="0 0 22 22"><path fill="#2f6fae" stroke="none" d="M3 4l6-2 8 3v9l-7 4-7-4z"/><path fill="#f2bb3c" stroke="none" d="M3 11h6v6H3z"/><path stroke="#fff" d="M3 6h6M6 3v6"/><path stroke="#53ad4b" stroke-width="3" d="M9 14l4 4 6-7"/></svg></span>
    <span class="c"><svg viewBox="0 0 22 22"><path d="M3.500 5.500h15v11h-15zM7 13l3-3M12 9l3-2M6 11v3h3M13 7h3v3"/></svg><svg viewBox="0 0 22 22"><path stroke-width="2.200" d="M3 5h16M3 11h16M3 17h16"/></svg></span>
  </div>
</footer>
</div>
<aside class="wall"></aside>
</div>
<div class="taskbar"></div>
</body>
</html>
```
FILE: styles.css
```css
* { box-sizing: border-box; }
body {
  margin: 0; width: 1916px; height: 1060px; overflow: hidden; background: #000;
  display: flex; flex-direction: column; padding-top: 4px;
  font: 12px/16px "Open Sans", "Noto Sans", sans-serif; letter-spacing: -.25px; color: #e4e5e7; white-space: nowrap;
}
svg { display: block; flex: none; fill: none; stroke: #d9dadc; stroke-width: 1.3; overflow: visible; }
svg text { stroke: none; }
b, em { font-weight: 400; font-style: normal; }
.fw { fill: #dcdcdc; stroke: none; } .fg { fill: #b4b6ba; stroke: none; } .fb { fill: #85c8fa; stroke: none; } .fy { fill: #ffd575; stroke: none; }
.b { stroke: #70bff8; } .o { stroke: #f3aa7d; } .g { stroke: #5fd489; } .red { stroke: #ee5f63; } .r1 { stroke: #ee9a73; } .yl { stroke: #ffd27c; }
.tbg { fill: #3b4453; }
.caret { flex: none; width: 0; height: 0; border: 4.500px solid transparent; border-top: 5px solid #d4d5d7; border-bottom: 0; }
.caret.small { border-width: 3px; border-top-width: 3.500px; border-bottom: 0; }
.dim { opacity: .5; }

.desktop { flex: none; height: 1046px; display: flex; }
.app { width: 1912px; display: flex; flex-direction: column; background: #222933; border-right: 1px solid #1689b8; border-bottom: 1px solid #1b86a8; }
.wall { width: 4px; background: linear-gradient(#4f83b4 0, #3f77a8 130px, #07527a 145px, #064d77 511px, #c79b4e 513px, #cda45b 614px, #e2b40c 615px 621px, #26303a 622px); }
.taskbar { flex: none; height: 10px; border-top: 4px solid #cb9c42; background: linear-gradient(90deg, transparent 510px, #635c50 510px 670px, transparent 670px), #3e3529; background-clip: padding-box; }

.titlebar { flex: none; height: 47px; display: flex; border-bottom: 1px solid #3b4252; }
.logo { width: 26px; height: 30px; margin: 7px 0 0 8px; }
.title-rows { flex: 1; }
.row { display: flex; align-items: center; }
.quick { height: 25px; padding-left: 14px; }
.q { width: 18px; height: 18px; margin-right: 6.200px; }
.qc { border-width: 3px; border-top-width: 3.500px; border-bottom: 0; margin: 0 6px 0 -1px; }
.qc.dim { margin-right: 3px; }
.doc-title { flex: none; width: 252px; margin-left: 339px; letter-spacing: -.43px; }
.doc-name { flex: none; width: 434px; letter-spacing: -.3px; }
.play { border: 4px solid transparent; border-left: 5px solid #ddd; border-right: 0; margin-right: 5px; }
.search { flex: none; width: 178px; height: 20px; line-height: 20px; padding-left: 3px; background: #484f63; color: #b9bdc6; font-style: italic; letter-spacing: -.35px; }
.glass { width: 16px; margin: 0 8px 0 5px; }
.user { margin-right: 4px; }
.user-name { flex: none; width: 84px; }
.cart { margin: 0 5px 0 11px; }
.ac { margin-left: -5px; margin-right: 10px; }
.vline { width: 1px; height: 18px; background: #434c5c; margin-right: 9px; }
.help { margin-right: 6px; } .help text { font: bold 14px "Open Sans", sans-serif; fill: #2a303a; }
.winbtns { width: 64px; height: 16px; margin-left: 68px; }
.menu { display: grid; grid-template-columns: 42px 44px 49px 53px 62px 52px 51px 81px 62px 81px 68px 49px 1111px 48px; height: 24px; padding-left: 21px; color: #b7bbc2; }
.docbtns { width: 48px; height: 16px; }

.tabs { flex: none; height: 21px; display: grid; grid-template-columns: 53px 40px 78px 77px 45px 63px 58px 81px 100px 30px; padding-left: 13px; color: #b9bdc4; line-height: 20px; align-items: end; }
.tabs span { height: 20px; }
.tabs .on { background: #3b4453; color: #fff; width: 67px; padding-left: 9px; height: 18px; line-height: 16px; border-radius: 2px 2px 0 0; }
.tabmin { width: 26px; height: 8px; align-self: center; }

.ribbon { flex: none; height: 97px; margin: 0 4px 0 2px; display: flex; background: #3b4453; }
.panel { flex: none; border-right: 1px solid #222933; display: flex; flex-direction: column; }
.p-text { width: 300px; } .p-dim { width: 341px; } .p-cen { width: 106px; } .p-lead { width: 272px; } .p-tab { width: 244px; } .p-mark { width: 123px; } .p-ann { flex: 1; border: 0; }
.pbody { height: 77px; padding-top: 4px; display: flex; }
.big { position: relative; flex: none; text-align: center; display: flex; flex-direction: column; align-items: center; padding-top: 2px; line-height: 15px; }
.big svg { width: 34px; height: 34px; margin-bottom: 6px; }
.p-text .big { width: 75px; padding-right: 3px; } .p-dim .big { width: 67px; padding-left: 1px; } .p-cen .big:first-child { width: 45px; } .p-cen .big:last-child { width: 57px; }
.p-lead .big { width: 69px; padding-left: 1px; } .p-tab .big { width: 40px; } .p-mark .big:first-child { width: 54px; } .p-mark .big:last-child { width: 64px; } .p-ann .big { width: 95px; padding-right: 1px; }
.corner { position: absolute; right: 6px; top: 53px; }
.p-mark .corner { right: 5px; }
.rows { flex: 1; }
.r { height: 24px; display: flex; align-items: center; }
.s { width: 18px; height: 18px; margin-right: 4px; }
.combo { flex: none; width: 200px; height: 22px; border: 1px solid #28303b; background: #4e5b70; display: flex; align-items: center; padding: 0 3px 1px 2px; color: #f0f0f0; }
.combo .caret { margin-left: auto; }
.find { color: #b8bcc4; font-style: italic; letter-spacing: -.4px; padding-right: 1px; } .fi { width: 17px; height: 17px; margin-left: auto; }
.abc { font: bold 7.500px "Open Sans", sans-serif; fill: #ddd; letter-spacing: 0; }
.p-dim .combo + .s { margin-left: 4px; } .p-dim .s { margin-right: 6px; }
.p-dim .lay { margin-right: 2px; } .use { width: 180px; } .swatch { width: 16px; height: 16px; background: #fff; border: 1px solid #111; margin-right: 3px; }
.p-dim .rows .cmds .s { margin: 0 4px 0 3px; } .cmds em + .caret { margin-left: 8px; }
.p-dim .rows .cmds .quickd { margin-left: 8px; } .p-dim .rows .cmds .cont { margin-left: 7px; }
.p-dim .cmds em:nth-of-type(1) { width: 34px; }
.l { padding-left: 3px; } .l .s { margin-right: 6px; } .l .s + em { margin-left: -2px; }
.ann { padding-left: 2px; }
.ptitle { height: 20px; line-height: 20px; position: relative; top: 1px; display: flex; align-items: center; justify-content: center; }
.ptitle .caret { margin-left: 6px; }
.p-text .ptitle { padding-right: 8px; } .p-dim .ptitle { padding-right: 14px; }
.launch { position: absolute; right: 3px; bottom: 6px; width: 8px; height: 8px; }
.at { width: 232px; }

.files { flex: none; height: 27px; display: flex; align-items: flex-end; padding-left: 20px; line-height: 23px; color: #bfc3ca; }
.ft { height: 22px; background: #303744; }
.start { width: 125px; padding-left: 11px; clip-path: path("M0 22C4 20 3 0 10 0H115C122 0 123 16 118 22Z"); }
.act { width: 130px; margin-left: -4px; padding-left: 14px; background: #3b4453; color: #fff; display: flex; clip-path: path("M0 22C6 18 2 0 12 0H118C126 0 122 18 130 22Z"); }
.act svg { width: 9px; height: 9px; margin: 6px 0 0 26px; stroke: #b4b7bc; }
.plus { width: 24px; height: 15px; margin: 0 0 3px 3px; background: #303744; border-radius: 2px 6px 7px 9px; }
.plus svg { width: 10px; height: 10px; margin: 3px 7px; stroke: #a8abb0; }

.toolbars { flex: none; height: 59px; margin-right: 3px; background: #3b4453; padding-top: 4px; }
.tbrow { height: 24px; margin-bottom: 3px; display: flex; }
.tb { flex: none; height: 24px; width: 431px; padding-left: 6px; border: 1px solid #272e39; display: flex; align-items: center; position: relative; }
.tb svg { width: 20px; height: 20px; margin: 0 1.500px; }
.tb .grip { position: absolute; left: 2px; top: 4px; width: 4px; height: 14px; background: conic-gradient(#c0c2c6 25%, transparent 0) 0 0/2px 2px; }
.tb.last { width: 230px; } .tb.draw { width: 469px; margin-right: 1px; } .tb.mod { width: 423px; }
.sep { flex: none; width: 2px; height: 18px; margin: 0 2px; background: linear-gradient(90deg, #000 50%, #fff 50%); }
.vpcombo { flex: none; width: 100px; height: 23px; background: #fff; border: 1px solid #ccc; display: flex; align-items: center; padding-left: 3px; margin-left: 1px; }
.vpcombo i { width: 77px; height: 16px; background: #eee; } .tb .vpcombo svg { width: 10px; height: 10px; margin-left: 5px; }

.canvas { position: relative; flex: none; height: 762px; }
.drawing { width: 1911px; height: 762px; background: #212830; overflow: hidden; }
.grid { shape-rendering: crispEdges; } .minor { stroke: #272c39; } .major { stroke: #343950; }
.ents path, .ents circle { stroke: #fff; vector-effect: non-scaling-stroke; } .ents path { stroke-width: 1.100; } .ents .w2 { stroke-width: 2.200; } .ents .solid { fill: #fff; stroke: none; }
.labels { font: 20px "Liberation Sans", Arial, sans-serif; fill: #fff; letter-spacing: 0; }
.vp { fill: #bcbfc3; font-size: 12px; }
.ucs { stroke: #fff; stroke-width: 1; font: 300 18px "Open Sans", sans-serif; letter-spacing: 0; } .ucs text { fill: #fff; }
.cube { stroke: none; letter-spacing: 0; font: bold 21.500px "Liberation Sans", sans-serif; text-anchor: middle; } .cube text { fill: #b6b7b9; }
.cube .face { font-size: 13px; fill: #4a4f57; } .cube .wcs { font: 11px "Liberation Sans", sans-serif; text-anchor: start; fill: #50535d; }
.navbar { stroke: #474c52; stroke-width: 1.300; } .navbar .fill { fill: #474c52; stroke: none; }
.cmdline { position: absolute; left: 402px; top: 736px; width: 1104px; height: 25px; display: flex; }
.cmdgrip { width: 55px; background: #2b303b; border-radius: 3px 0 0 3px; } .cmdgrip svg { width: 55px; height: 26px; }
.cmdfield { flex: 1; display: flex; align-items: center; background: rgba(205,206,208,.91); color: #626468; font: italic 12px "DejaVu Sans Mono", monospace; letter-spacing: -.25px; }
.cmdfield svg { width: 30px; height: 26px; margin-right: 6px; }
.up { border: 4px solid transparent; border-bottom: 4px solid #555; border-top: 0; margin: 0 3px 0 auto; }

.status { flex: none; height: 32px; border-left: 4px solid #000; border-top: 1px solid #3e4552; display: flex; line-height: 16px; }
.lt { height: 17px; background: #323947; clip-path: polygon(0 0, 100% 0, calc(100% - 6px) 100%, 6px 100%); text-align: center; color: #b4b8bf; }
.model { width: 64px; margin-left: 5px; background: #3b4453; color: #fff; font-weight: 700; } .lay1 { width: 61px; letter-spacing: -.1px; }
.add { width: 22px; height: 15px; margin-left: 4px; border-radius: 8px 0 8px 4px; clip-path: none; } .add svg { width: 9px; height: 9px; margin: 4px 7px; stroke: #a8abb0; }
.st { margin: 1px 5px 0 auto; display: grid; grid-template-columns: 183px 51px 66px 25px 25px 105px 65px 25px 25px 25px 43px 107px 109px 41px 27px 114px 27px 41px 27px 27px 25px 48px; }
.c { height: 24px; margin-right: 1px; background: #3a4250; display: flex; align-items: center; color: #f0f0f0; }
.c.w { margin-right: 3px; } .c:last-child { margin-right: 0; }
.c svg { width: 22px; height: 22px; margin: 0 1px; } .c svg.on { background: #5c8dc3; stroke: #fff; } .c .caret { margin: 0 3.500px; }
.coords { justify-content: flex-end; padding-right: 5px; letter-spacing: 0; }
.space { justify-content: center; }
.ratio { margin: 0 1px 0 4px; }
.arch { width: 70px; margin: 0 0 0 5px; }
```
